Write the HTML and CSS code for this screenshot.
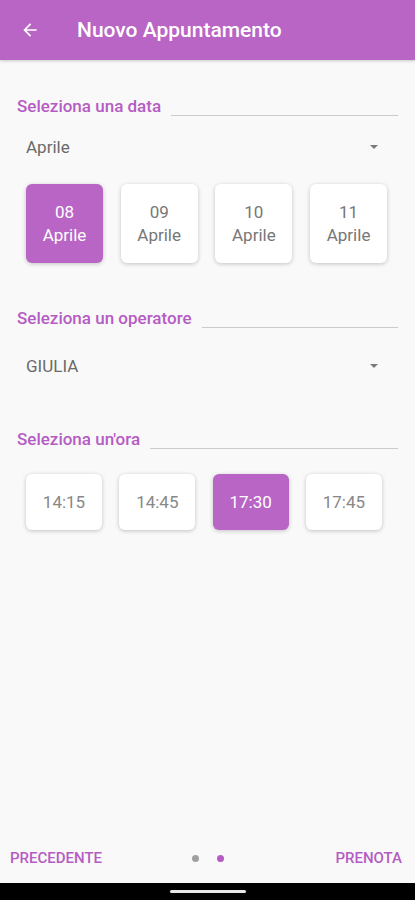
FILE: index.html
```html
<!DOCTYPE html>
<html lang="it">
<head>
    <meta charset="UTF-8">
    <meta name="viewport" content="width=device-width, initial-scale=1.0">
    <title>Nuovo Appuntamento</title>
    <link rel="stylesheet" href="styles.css">
</head>
<body>
    <div class="app">
        <header class="topbar">
            <svg class="back" width="20" height="20" viewBox="0 0 24 24">
                <path d="M20 11H7.83l5.59-5.59L12 4l-8 8 8 8 1.41-1.41L7.83 13H20v-2z" fill="#fff"/>
            </svg>
            <h1>Nuovo Appuntamento</h1>
        </header>

        <main class="content">
            <div class="label-row first">
                <span class="label">Seleziona una data</span>
                <span class="rule"></span>
            </div>
            <div class="select month">
                <span>Aprile</span>
                <span class="caret"></span>
            </div>
            <div class="cards dates">
                <div class="card active"><span>08</span><span>Aprile</span></div>
                <div class="card"><span>09</span><span>Aprile</span></div>
                <div class="card"><span>10</span><span>Aprile</span></div>
                <div class="card"><span>11</span><span>Aprile</span></div>
            </div>

            <div class="label-row operator">
                <span class="label">Seleziona un operatore</span>
                <span class="rule"></span>
            </div>
            <div class="select staff">
                <span>GIULIA</span>
                <span class="caret"></span>
            </div>

            <div class="label-row hour">
                <span class="label">Seleziona un'ora</span>
                <span class="rule"></span>
            </div>
            <div class="cards times">
                <div class="card">14:15</div>
                <div class="card">14:45</div>
                <div class="card active">17:30</div>
                <div class="card">17:45</div>
            </div>
        </main>

        <footer class="stepper">
            <span class="step-btn">PRECEDENTE</span>
            <span class="dots">
                <span class="dot"></span>
                <span class="dot on"></span>
            </span>
            <span class="step-btn next">PRENOTA</span>
        </footer>
        <div class="navbar"><span class="handle"></span></div>
    </div>
</body>
</html>
```

FILE: styles.css
```css
body {
    margin: 0;
    font-family: Roboto, "Liberation Sans", sans-serif;
    background-color: #f9f9f9;
}

.app {
    height: 900px;
    display: flex;
    flex-direction: column;
}

.topbar {
    height: 60px;
    flex-shrink: 0;
    background-color: #b865c5;
    display: flex;
    align-items: center;
    padding-left: 20px;
    box-shadow: 0 1px 3px rgba(0, 0, 0, 0.2);
}

.topbar h1 {
    margin: 0 0 0 37px;
    color: white;
    font-size: 21px;
    font-weight: 500;
}

.content {
    flex: 1;
    padding: 0 17px;
}

/* section titles with the grey line after them */
.label-row {
    display: flex;
    align-items: flex-end;
    gap: 10px;
    height: 20px;
}

.label-row.first {
    margin-top: 36px;
}

.label-row.operator {
    margin-top: 45px;
}

.label-row.hour {
    margin-top: 52px;
}

.label {
    color: #b55cc4;
    font-size: 17px;
    font-weight: 500;
    line-height: 20px;
}

.rule {
    flex: 1;
    border-bottom: 1px solid #cbcbcb;
}

.select {
    display: flex;
    justify-content: space-between;
    align-items: center;
    margin-left: 9px;
    padding-right: 20px;
    color: #6a6a6a;
    font-size: 17px;
    height: 22px;
}

.select.month {
    margin-top: 20px;
}

.select.staff {
    margin-top: 27px;
}

.caret {
    width: 0;
    height: 0;
    border-left: 4px solid transparent;
    border-right: 4px solid transparent;
    border-top: 4px solid #7a7a7a;
}

.cards {
    display: flex;
    gap: 17px;
    padding-left: 9px;
}

.card {
    width: 77px;
    background-color: white;
    border-radius: 6px;
    box-shadow: 0 1px 4px rgba(0, 0, 0, 0.22);
    color: #777;
    font-size: 17px;
    text-align: center;
}

.card.active {
    background-color: #b865c5;
    color: white;
}

.dates {
    margin-top: 26px;
    gap: 17.7px;
}

.dates .card {
    height: 79px;
    display: flex;
    flex-direction: column;
    justify-content: center;
    line-height: 23px;
}

.times {
    margin-top: 25px;
    gap: 17.3px;
}

.times .card {
    width: 76px;
    height: 56px;
    line-height: 56px;
    color: #888;
}

.times .card.active {
    color: white;
}

.stepper {
    height: 50px;
    display: grid;
    grid-template-columns: 1fr auto 1fr;
    align-items: center;
    padding: 0 13px 0 10px;
}

.step-btn {
    color: #b55cc4;
    font-size: 15px;
    font-weight: 500;
}

.step-btn.next {
    text-align: right;
}

.dots {
    display: flex;
    gap: 18px;
    margin-left: 3px;
}

.dot {
    width: 7px;
    height: 7px;
    border-radius: 50%;
    background-color: #a0a0a0;
}

.dot.on {
    background-color: #b55cc4;
}

.navbar {
    height: 17px;
    background-color: black;
    display: flex;
    justify-content: center;
    align-items: center;
}

.handle {
    width: 76px;
    height: 3px;
    border-radius: 2px;
    background-color: #e8e8e8;
}
```
